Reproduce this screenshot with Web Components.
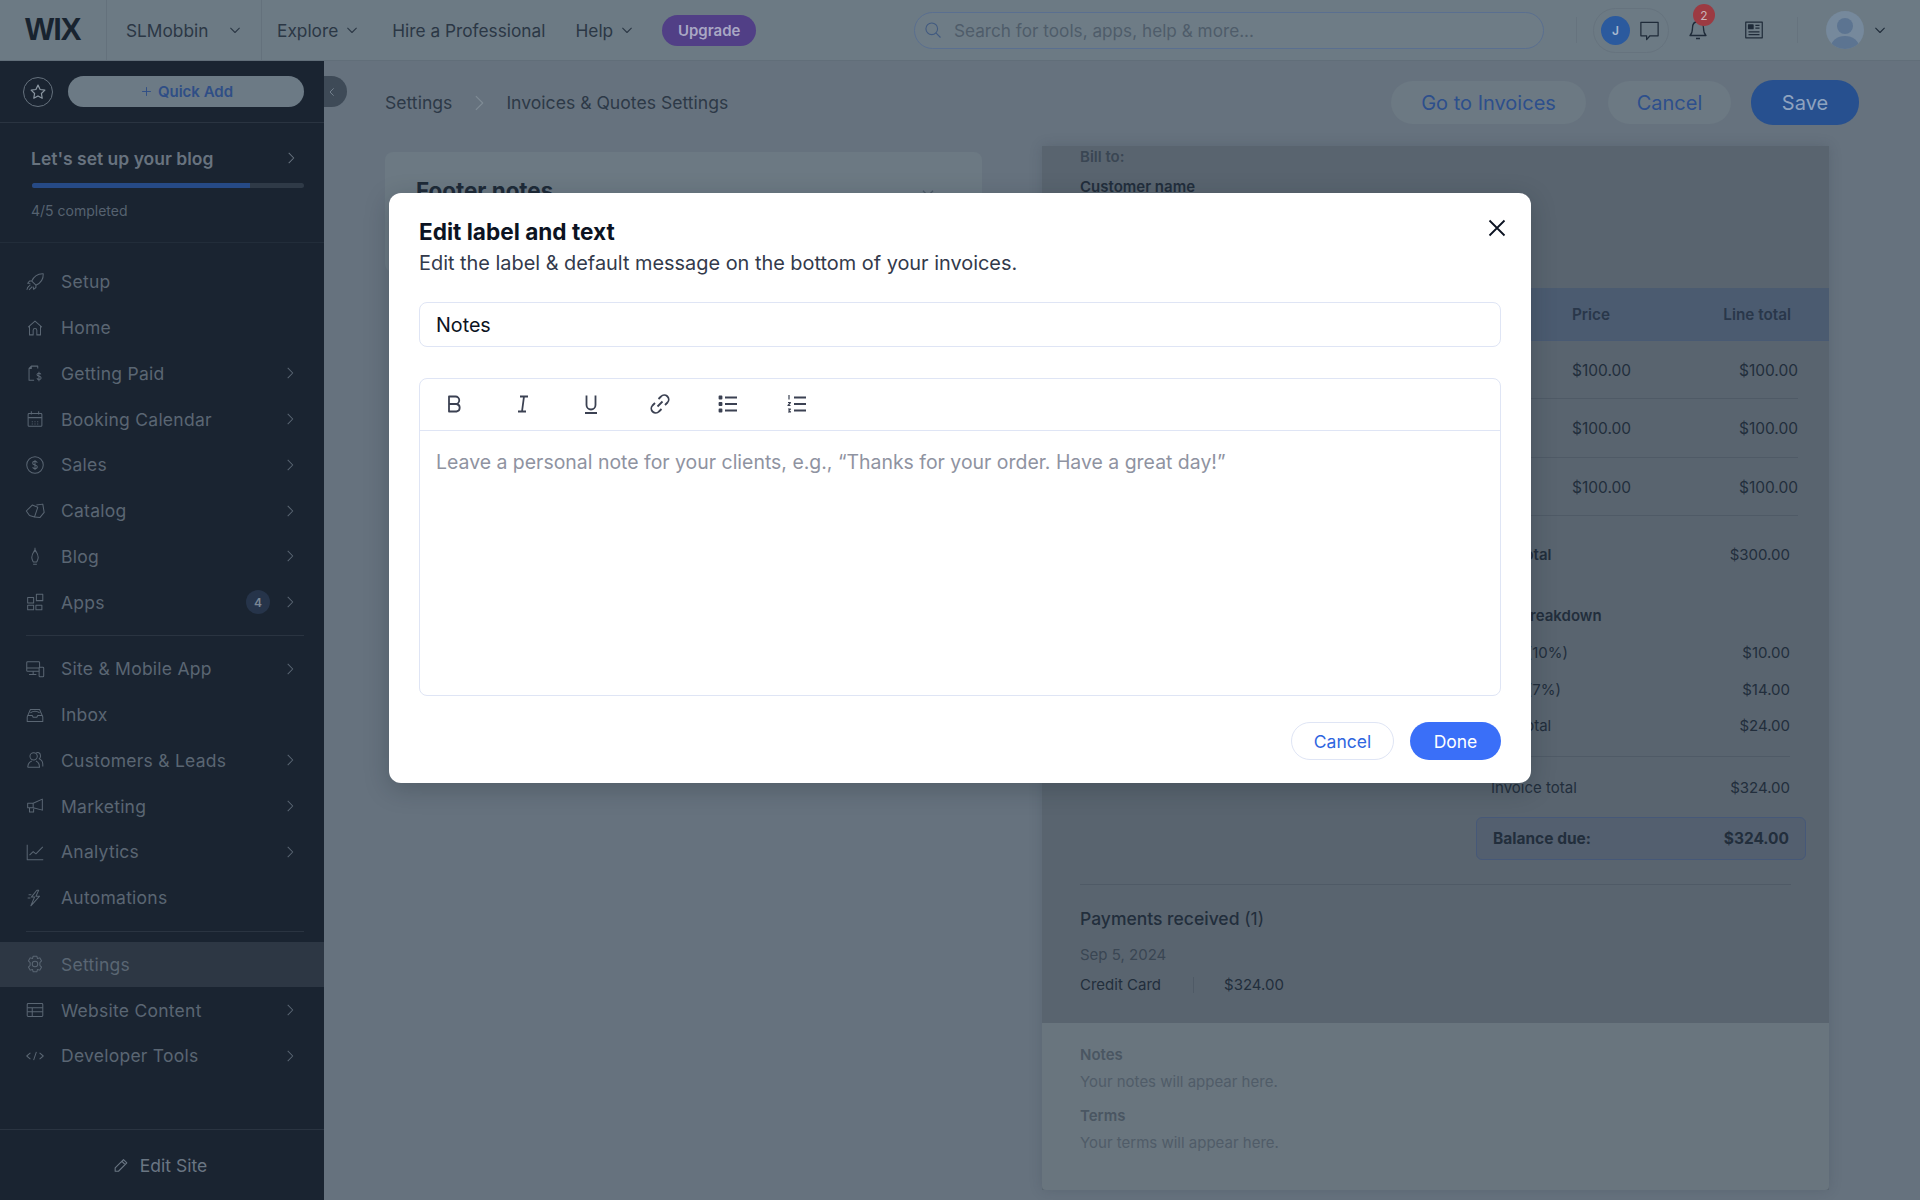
<!DOCTYPE html>
<html lang="en">
<head>
<meta charset="utf-8">
<title>Invoices & Quotes Settings</title>
<style>
  html, body { margin: 0; height: 100%; overflow: hidden; background: #66727e; }
  body { font-family: Inter, "Liberation Sans", sans-serif; }
</style>
</head>
<body>
<app-shell>
  <top-bar></top-bar>
  <side-nav></side-nav>
  <settings-page></settings-page>
  <edit-dialog></edit-dialog>
</app-shell>

<script>
/* Icons, all drawn on a 24 box with a stroke */
const ICONS = {
    chevronRight: '<path d="M9.5 6.5 15 12l-5.5 5.5"/>',
    chevronDown: '<path d="M6.5 9.5 12 15l5.5-5.5"/>',
    chevronLeft: '<path d="M14.5 6.5 9 12l5.5 5.5"/>',
    setup: '<path d="M21 3c-6-.3-10 2.500-12.500 8l4.500 4.500c5.500-2.500 8.300-6.500 8-12.500Z"/><path d="M8.500 11H6l-2 2.500 3 .5M13 15.500V18l-2.500 2-.5-3"/><path d="M7 15 3.500 18.500M9 17l-3.500 3.500M5 16.500 3 20.500"/>',
    home: '<path d="M4.500 11 12 4.500l7.500 6.500M6 10v9.500h4v-5a2 2 0 0 1 4 0v5h4V10"/>',
    paid: '<path d="M15 7V4.500H8L5.500 7v13H11M5.500 7H8V4.500"/><path d="M18.500 13.500c-.5-1-1.300-1.300-2.200-1.300-1.200 0-2.100.6-2.100 1.700 0 2.300 4.500 1.200 4.500 3.500 0 1.100-1 1.700-2.300 1.700-1 0-1.900-.5-2.300-1.400M16.300 10.500v10.500"/>',
    calendar: '<rect x="4.500" y="6" width="15" height="14" rx="1"/><path d="M4.500 10.500h15M8 3.500V7M16 3.500V7M8.500 15h1M11.500 15h1M14.500 15h1M8.500 17.500h1M11.500 17.500h1M14.500 17.500h1"/>',
    sales: '<circle cx="12" cy="12" r="9"/><path d="M14.500 9.500c-.4-1-1.300-1.500-2.500-1.500-1.400 0-2.500.7-2.500 2 0 2.700 5 1.300 5 4 0 1.300-1.100 2-2.500 2-1.300 0-2.200-.6-2.600-1.600M12 6.500v11"/>',
    catalog: '<path d="M2.500 12 9 5.500l6 2.500-3.500 10.500L6 17Z"/><path d="M13.500 5.500l7-1 1.500 9-4.500 5.500-6-.5"/>',
    blog: '<path d="M12 3v5M12 5c-1.200 2.500-3.500 4.500-3.500 8.500 0 2 1 3.500 1.700 5h3.600c.7-1.500 1.700-3 1.700-5C15.500 9.500 13.200 7.500 12 5ZM10 21h4"/>',
    apps: '<rect x="4" y="7" width="6.500" height="6"/><rect x="13.500" y="3.500" width="7" height="7"/><rect x="4" y="15.500" width="6.500" height="5"/><rect x="13" y="15.500" width="6.500" height="5"/>',
    site: '<rect x="3" y="4" width="14" height="10.500" rx="1"/><path d="M3 11h14M10 14.500V18M5.500 18h8"/><rect x="16.500" y="10" width="5" height="10.500" rx="1" fill="#1a2431"/>',
    inbox: '<path d="M3.500 14 7 6h10l3.500 8v5h-17ZM3.500 12.500H9l1 2h4l1-2h5.500"/><path d="M7 9.500c3-2 7-2 10 0"/>',
    customers: '<circle cx="10.500" cy="8" r="4"/><path d="M4 20c0-4 2-6 4.500-7M13 13c2.500 1 4 3 4 7H4M13 4.500c2-1.500 5-.5 5 3 0 1.500-.7 2.600-1.500 3.200 2.500 1 4 3.300 4 6.300v2"/>',
    marketing: '<path d="M20 4.500v12L10 14H4V9h6ZM10 9v5M6 14v4.500h4.500V15"/>',
    analytics: '<path d="M3.500 4v16.500h17.500M6 15.500l4-4 3 2.500 7.500-7.500"/>',
    automations: '<path d="M14 3.500 8 11h3.500L7.500 20.500 17 10h-4l3-6.500ZM5 8.500h3M4 12h3"/>',
    settings: '<circle cx="12" cy="12" r="3"/><path d="M10 3.500h4l.7 2.600 2.500-.8 2 3.400-1.900 1.900v2.800l1.900 1.900-2 3.400-2.500-.8-.7 2.600h-4l-.7-2.600-2.500.8-2-3.400 1.900-1.900v-2.800L4.800 8.700l2-3.400 2.500.8Z"/>',
    content: '<rect x="3.500" y="5" width="17" height="14" rx="1"/><path d="M3.500 9.500h17M3.500 14h17M9 9.500V19"/>',
    code: '<path d="M7 8.500 3 12l4 3.500M17 8.500l4 3.500-4 3.500M13.500 7.500l-3 9"/>',
    pencil: '<path d="m5 15.500 10-10 4 4-10 10H5ZM13 7.500l4 4"/>',
    star: '<path d="m12 4.500 2.300 4.800 5.200.7-3.800 3.600.9 5.200-4.600-2.500-4.600 2.500.9-5.200L4.500 10l5.200-.7Z"/>',
    plus: '<path d="M12 5v14M5 12h14"/>',
    search: '<circle cx="10.500" cy="10.500" r="7"/><path d="m15.500 15.500 5.500 5.500"/>',
    chat: '<path d="M3 3.500h18v14h-8.500L9 21.500v-4H3Z"/>',
    bell: '<path d="M12 3.500c-3.500 0-5.500 2.800-5.500 6.500 0 4-1 6-2.500 7.500h16c-1.500-1.500-2.500-3.500-2.500-7.500 0-3.700-2-6.500-5.500-6.500ZM10 20.500h4"/>',
    news: '<rect x="3" y="3.500" width="18" height="17"/><rect x="6" y="6.500" width="5" height="4" fill="currentColor"/><path d="M13.500 7h4.500M13.500 10h4.500M6 14h12M6 17h12"/>',
    close: '<path d="m4.500 4.500 15 15M19.500 4.500l-15 15"/>',
    bold: '<path d="M7 4.500h6.500a3.700 3.700 0 0 1 0 7.500H7Zm0 7.500h7.500a3.800 3.800 0 0 1 0 7.500H7Z"/>',
    italic: '<path d="M9 4.500h8M7 19.500h8M13 4.500l-2 15"/>',
    underline: '<path d="M7.500 3.500V13a4.500 4.500 0 0 0 9 0V3.500M6 21h12"/>',
    link: '<path d="m9.500 14.500 5-5M10.500 7l2.500-2.500a4.200 4.200 0 0 1 6.500 6L17 13M13.500 17 11 19.500a4.200 4.200 0 0 1-6.500-6L7 11"/>',
    bullets: '<path d="M9 5.500h12M9 12h12M9 18.500h12"/><rect x="3.500" y="4.500" width="2" height="2" fill="currentColor"/><rect x="3.500" y="11" width="2" height="2" fill="currentColor"/><rect x="3.500" y="17.500" width="2" height="2" fill="currentColor"/>',
    numbers: '<path d="M9 5.500h12M9 12h12M9 18.500h12"/><path stroke-width="1.200" d="M4 3v4.500M3 10.500h2.500L3 13.500h2.500M3 17h2.500L4 18.500l1.500 1.500H3"/>'
};

/* Helper for the repeated boilerplate: open shadow root from a template string */
class BaseElement extends HTMLElement {
    constructor() {
        super();
        this.attachShadow({ mode: 'open' });
    }
    connectedCallback() {
        this.shadowRoot.innerHTML = this.render();
    }
}

function icon(name, size, width = 1.3) {
    return `<svg width="${size}" height="${size}" viewBox="0 0 24 24" fill="none" stroke="currentColor" stroke-width="${width}" stroke-linejoin="round" style="display:block;flex:none">${ICONS[name]}</svg>`;
}

class AppShell extends BaseElement {
    render() {
        return `
        <style>
            :host { display: grid; grid-template: 61px 1fr / 324px 1fr; width: 1920px; height: 1200px; overflow: hidden; position: relative; }
            ::slotted(top-bar) { grid-column: 1 / -1; }
        </style>
        <slot></slot>`;
    }
}

class TopBar extends BaseElement {
    render() {
        return `
        <style>
            :host { display: flex; align-items: center; height: 61px; box-sizing: border-box; background: #6c7a84; border-bottom: 1px solid #616e79; color: #2b3745; font-size: 17.300px; }
            .logo { width: 107px; box-sizing: border-box; padding-left: 25px; height: 100%; display: flex; align-items: center; border-right: 1px solid #64717c; font: 700 31px "Liberation Sans", sans-serif; letter-spacing: -1px; color: #18232f; }
            .site { width: 155px; height: 100%; box-sizing: border-box; padding: 0 16px 0 19px; display: flex; align-items: center; justify-content: space-between; border-right: 1px solid #64717c; }
            .links { display: flex; align-items: center; gap: 30px; padding-left: 15px; width: 652px; box-sizing: border-box; }
            .menu { display: flex; align-items: center; gap: 4px; }
            .upgrade { background: #513f86; color: #a9a7c4; font-weight: 600; font-size: 15px; height: 31px; width: 94px; border-radius: 16px; display: flex; align-items: center; justify-content: center; margin-left: -5px; }
            .search { width: 630px; height: 37px; box-sizing: border-box; border: 1.5px solid #5a6f90; border-radius: 19px; background: #6e7c86; display: flex; align-items: center; padding-left: 8px; gap: 11px; color: #4f5c6a; font-size: 17.200px; }
            .search svg { color: #415a80; }
            .tools { display: flex; align-items: center; flex: 1; position: relative; height: 100%; color: #1f2b39; }
            .rule { width: 1px; height: 26px; background: #66737e; }
            .chat { margin-left: 16px; width: 76px; height: 45px; border: 1px solid #66737e; border-radius: 23px; box-sizing: border-box; display: flex; align-items: center; padding-left: 7px; gap: 8px; }
            .j { width: 29px; height: 29px; border-radius: 50%; background: #2b5a9e; color: #a7b8cf; font-size: 12px; font-weight: 600; display: flex; align-items: center; justify-content: center; }
            .bell { margin-left: 17px; position: relative; }
            .badge { position: absolute; left: 7px; top: -14px; width: 22px; height: 22px; border-radius: 50%; background: #9c3a42; color: #c9b3b8; font-size: 12px; display: flex; align-items: center; justify-content: center; }
            .news { margin-left: 33px; margin-right: 32px; }
            .me { margin-left: 28px; width: 38px; height: 38px; border-radius: 50%; background: #76899c; overflow: hidden; position: relative; }
            .me::before { content: ""; position: absolute; left: 11px; top: 7px; width: 16px; height: 16px; border-radius: 50%; background: #5c7491; }
            .me::after { content: ""; position: absolute; left: 5px; top: 25px; width: 28px; height: 22px; border-radius: 50%; background: #5c7491; }
            .caret { margin-left: 6px; }
        </style>
        <div class="logo">WIX</div>
        <div class="site"><span>SLMobbin</span>${icon('chevronDown', 20)}</div>
        <div class="links">
            <span class="menu">Explore ${icon('chevronDown', 20)}</span>
            <span>Hire a Professional</span>
            <span class="menu">Help ${icon('chevronDown', 20)}</span>
            <span class="upgrade">Upgrade</span>
        </div>
        <div class="search">${icon('search', 20)}<span>Search for tools, apps, help &amp; more...</span></div>
        <div class="tools">
            <span class="rule" style="margin-left:32px"></span>
            <div class="chat"><span class="j">J</span>${icon('chat', 23)}</div>
            <div class="bell">${icon('bell', 24)}<span class="badge">2</span></div>
            <div class="news">${icon('news', 22)}</div>
            <span class="rule"></span>
            <div class="me"></div>
            <div class="caret">${icon('chevronDown', 20)}</div>
        </div>`;
    }
}

class NavItem extends BaseElement {
    render() {
        const more = this.hasAttribute('more');
        const count = this.getAttribute('count');
        return `
        <style>
            :host { display: flex; align-items: center; height: 45.750px; padding: 0 23px 0 24px; box-sizing: border-box; color: #5a6673; font-size: 17.500px; letter-spacing: .25px; }
            :host([active]) { background: #2d3744; }
            .label { margin-left: 15px; flex: 1; }
            .count { width: 24px; height: 24px; border-radius: 50%; background: #26344a; color: #7a8694; font-size: 12px; font-weight: 600; display: flex; align-items: center; justify-content: center; margin-right: 9px; }
            .more { width: 22px; }
        </style>
        ${icon(this.getAttribute('icon'), 22, 1.100)}
        <span class="label"><slot></slot></span>
        ${count ? `<span class="count">${count}</span>` : ''}
        <span class="more">${more ? icon('chevronRight', 22, 1.100) : ''}</span>`;
    }
}

class SideNav extends BaseElement {
    render() {
        return `
        <style>
            :host { display: flex; flex-direction: column; background: #1a2431; color: #606c79; position: relative; }
            .head { display: flex; align-items: center; gap: 15px; height: 62px; padding: 0 20px 0 23px; box-sizing: border-box; border-bottom: 1px solid #2a3441; }
            .star { width: 30px; height: 30px; border: 1px solid #65717d; border-radius: 50%; box-sizing: border-box; display: flex; align-items: center; justify-content: center; color: #8b97a2; }
            .quick { flex: 1; height: 31px; border-radius: 16px; background: #6c7a85; color: #2f4e86; font-size: 15px; font-weight: 600; display: flex; align-items: center; justify-content: center; gap: 4px; }
            .tab { position: absolute; left: 324px; top: 15px; width: 23px; height: 31px; border-radius: 0 16px 16px 0; background: #3e4a57; color: #7a8793; display: flex; align-items: center; }
            .setup { height: 120px; box-sizing: border-box; padding: 22px 20px 0 31px; border-bottom: 1px solid #222d3a; }
            .setup-title { display: flex; justify-content: space-between; align-items: center; font-size: 17.500px; font-weight: 600; color: #68737f; height: 26px; }
            .setup-title svg { margin-right: 2px; }
            .bar { height: 5px; border-radius: 3px; background: #2f3a47; margin: 12px 0 13px 1px; overflow: hidden; }
            .bar i { display: block; width: 80%; height: 100%; background: #264a86; }
            .progress { font-size: 14px; color: #566270; line-height: 20px; }
            .group { padding-top: 16px; }
            hr { border: 0; height: 1px; background: #2a3441; margin: 10px 20px 10px 26px; }
            .spacer { flex: 1; }
            .edit { height: 70px; border-top: 1px solid #2a3441; display: flex; align-items: center; justify-content: center; gap: 9px; color: #6a7683; font-size: 17.500px; padding-right: 6px; }
        </style>
        <div class="head">
            <span class="star">${icon('star', 22)}</span>
            <span class="quick">${icon('plus', 15, 1.500)}Quick Add</span>
        </div>
        <span class="tab">${icon('chevronLeft', 16)}</span>
        <div class="setup">
            <div class="setup-title"><span>Let's set up your blog</span>${icon('chevronRight', 22, 1.100)}</div>
            <div class="bar"><i></i></div>
            <div class="progress">4/5 completed</div>
        </div>
        <div class="group">
            <nav-item icon="setup">Setup</nav-item>
            <nav-item icon="home">Home</nav-item>
            <nav-item icon="paid" more>Getting Paid</nav-item>
            <nav-item icon="calendar" more>Booking Calendar</nav-item>
            <nav-item icon="sales" more>Sales</nav-item>
            <nav-item icon="catalog" more>Catalog</nav-item>
            <nav-item icon="blog" more>Blog</nav-item>
            <nav-item icon="apps" more count="4">Apps</nav-item>
        </div>
        <hr>
        <div>
            <nav-item icon="site" more>Site &amp; Mobile App</nav-item>
            <nav-item icon="inbox">Inbox</nav-item>
            <nav-item icon="customers" more>Customers &amp; Leads</nav-item>
            <nav-item icon="marketing" more>Marketing</nav-item>
            <nav-item icon="analytics" more>Analytics</nav-item>
            <nav-item icon="automations">Automations</nav-item>
        </div>
        <hr>
        <div>
            <nav-item icon="settings" active>Settings</nav-item>
            <nav-item icon="content" more>Website Content</nav-item>
            <nav-item icon="code" more>Developer Tools</nav-item>
        </div>
        <div class="spacer"></div>
        <div class="edit">${icon('pencil', 20)}<span>Edit Site</span></div>`;
    }
}

class SettingsPage extends BaseElement {
    render() {
        return `
        <style>
            :host { display: flex; flex-direction: column; min-width: 0; overflow: hidden; background: #66727e; }
            header { flex: none; height: 85px; box-sizing: border-box; display: flex; align-items: center; padding: 0 61px 2px; color: #2d3947; font-size: 17.600px; }
            .crumbs { display: flex; align-items: center; gap: 12px; flex: 1; }
            .crumbs svg { color: #7f8b95; }
            .btn { height: 43px; border-radius: 22px; background: #6c7983; color: #2d4f8c; font-size: 20px; display: flex; align-items: center; justify-content: center; }
            .save { height: 45px; width: 108px; background: #27508f; color: #8ea3bf; margin-left: 20px; }
            .body { flex: 1; display: flex; gap: 60px; padding-left: 61px; min-height: 0; }
            .card { width: 597px; height: 120px; margin-top: 6px; box-sizing: border-box; background: #6c7983; border-radius: 8px; padding: 25px 31px; display: flex; justify-content: space-between; font-size: 22.400px; font-weight: 700; color: #1e2a38; }
            .card svg { margin: 5px 12px 0 0; color: #4d5b68; }
        </style>
        <header>
            <div class="crumbs"><span>Settings</span>${icon('chevronRight', 30, .9)}<span>Invoices &amp; Quotes Settings</span></div>
            <span class="btn" style="width:195px">Go to Invoices</span>
            <span class="btn" style="width:123px;margin-left:22px">Cancel</span>
            <span class="btn save">Save</span>
        </header>
        <div class="body">
            <div class="card"><span>Footer notes</span>${icon('chevronDown', 22)}</div>
            <invoice-preview></invoice-preview>
        </div>`;
    }
}

class InvoicePreview extends BaseElement {
    render() {
        return `
        <style>
            :host { display: block; width: 787px; height: 1044px; background: #59646f; color: #222e3c; font-size: 15px; box-shadow: 0 0 12px rgba(40,50,60,.18); }
            .to { padding: 0 38px; height: 142px; box-sizing: border-box; }
            .to div { line-height: 22px; }
            .to .name { font-weight: 600; margin-top: 8px; }
            .muted { color: #3a4653; font-weight: 600; }
            .thead { height: 53px; background: #4b5b70; border-bottom: 1px solid #495a73; box-sizing: border-box; display: grid; grid-template-columns: 530px 1fr auto; align-items: center; padding: 0 38px 0 0; font-size: 15.300px; font-weight: 600; color: #29374a; }
            .row { height: 58.300px; box-sizing: border-box; border-bottom: 1px solid #4f5a66; margin-right: 31px; padding-top: 2px; display: grid; grid-template-columns: 530px 1fr auto; align-items: center; font-size: 15.500px; }
            .totals { width: 299px; margin-left: 449px; padding-top: 20px; }
            .line { display: flex; justify-content: space-between; align-items: center; height: 36.700px; }
            .strong { font-weight: 600; }
            .rule { height: 1px; background: #4f5a66; margin: 12px 0; }
            .balance { margin: 11px -16px 0 -15px; height: 43px; border: 1px solid #465878; border-radius: 6px; box-sizing: border-box; background: #535f6f; display: flex; align-items: center; justify-content: space-between; padding: 0 16px; font-weight: 700; font-size: 15.500px; }
            .pay { margin: 24px 38px 0; border-top: 1px solid #4f5a66; padding-top: 22px; height: 139px; box-sizing: border-box; }
            .pay h3 { margin: 0 0 13px; font-size: 17.500px; font-weight: 500; line-height: 24px; }
            .pay h3 span { font-weight: 400; }
            .pay p { margin: 0; line-height: 22px; }
            .pay .date { color: #3a4653; margin-bottom: 8px; }
            .sep { display: inline-block; width: 1px; height: 16px; background: #4f5a66; margin: 0 30px 0 32px; vertical-align: -3px; }
            .foot { height: 167px; background: #69757e; box-sizing: border-box; padding: 21px 38px; color: #4a5662; border-radius: 0 0 4px 4px; }
            .foot b { display: block; font-weight: 600; line-height: 22px; }
            .foot span { display: block; line-height: 22px; margin: 5px 0 12px; color: #505c68; }
        </style>
        <div class="to">
            <div class="muted">Bill to:</div>
            <div class="name">Customer name</div>
        </div>
        <div class="thead"><span></span><span>Price</span><span>Line total</span></div>
        <div class="row"><span></span><span>$100.00</span><span>$100.00</span></div>
        <div class="row"><span></span><span>$100.00</span><span>$100.00</span></div>
        <div class="row"><span></span><span>$100.00</span><span>$100.00</span></div>
        <div class="totals">
            <div class="line"><span class="strong">Subtotal</span><span>$300.00</span></div>
            <div class="line strong" style="margin-top:25px">Tax breakdown</div>
            <div class="line"><span>Rate (10%)</span><span>$10.00</span></div>
            <div class="line"><span>Rate (7%)</span><span>$14.00</span></div>
            <div class="line"><span>Tax total</span><span>$24.00</span></div>
            <div class="rule"></div>
            <div class="line"><span>Invoice total</span><span>$324.00</span></div>
            <div class="balance"><span>Balance due:</span><span>$324.00</span></div>
        </div>
        <div class="pay">
            <h3>Payments received <span>(1)</span></h3>
            <p class="date">Sep 5, 2024</p>
            <p>Credit Card<i class="sep"></i>$324.00</p>
        </div>
        <div class="foot">
            <b>Notes</b><span>Your notes will appear here.</span>
            <b>Terms</b><span>Your terms will appear here.</span>
        </div>`;
    }
}

class EditDialog extends BaseElement {
    render() {
        const tools = ['bold', 'italic', 'underline', 'link', 'bullets', 'numbers'];
        return `
        <style>
            :host { position: absolute; inset: 0; display: flex; justify-content: center; align-items: flex-start; padding-top: 193px; box-sizing: border-box; }
            .box { position: relative; width: 1142px; height: 590px; box-sizing: border-box; background: #fff; border-radius: 12px; padding: 25px 30px 0; box-shadow: 0 6px 24px rgba(20,30,40,.25); color: #0c1322; }
            h2 { margin: 0; font-size: 22.600px; line-height: 28px; font-weight: 700; }
            p { margin: 2px 0 0; font-size: 19.900px; line-height: 30px; color: #333a4b; }
            .close { position: absolute; right: 22px; top: 23px; color: #0c1322; }
            .field { margin-top: 24px; height: 45px; border: 1.500px solid #dfe5f5; border-radius: 8px; box-sizing: border-box; display: flex; align-items: center; padding-left: 16px; font-size: 19.700px; }
            .editor { margin-top: 31px; height: 318px; border: 1.500px solid #dfe5f5; border-radius: 8px; box-sizing: border-box; }
            .tools { height: 52px; border-bottom: 1.500px solid #dfe5f5; box-sizing: border-box; display: flex; align-items: center; padding: 0 0 2px 22px; gap: 44.500px; color: #3b4152; }
            .hint { padding: 16px 16px; font-size: 19.450px; line-height: 30px; color: #8f93a1; }
            .actions { display: flex; justify-content: flex-end; gap: 16px; margin-top: 26px; }
            .actions span { height: 38px; border-radius: 19px; box-sizing: border-box; display: flex; align-items: center; justify-content: center; font-size: 17.500px; }
            .cancel { width: 103px; border: 1.500px solid #dfe5f5; color: #2f66e0; }
            .done { width: 91px; background: #3a6ff8; color: #fff; }
        </style>
        <div class="box">
            <h2>Edit label and text</h2>
            <p>Edit the label &amp; default message on the bottom of your invoices.</p>
            <span class="close">${icon('close', 24, 1.800)}</span>
            <div class="field">Notes</div>
            <div class="editor">
                <div class="tools">${tools.map(t => icon(t, 24, 1.800)).join('')}</div>
                <div class="hint">Leave a personal note for your clients, e.g., “Thanks for your order. Have a great day!”</div>
            </div>
            <div class="actions"><span class="cancel">Cancel</span><span class="done">Done</span></div>
        </div>`;
    }
}

customElements.define('app-shell', AppShell);
customElements.define('top-bar', TopBar);
customElements.define('nav-item', NavItem);
customElements.define('side-nav', SideNav);
customElements.define('settings-page', SettingsPage);
customElements.define('invoice-preview', InvoicePreview);
customElements.define('edit-dialog', EditDialog);
</script>
</body>
</html>
